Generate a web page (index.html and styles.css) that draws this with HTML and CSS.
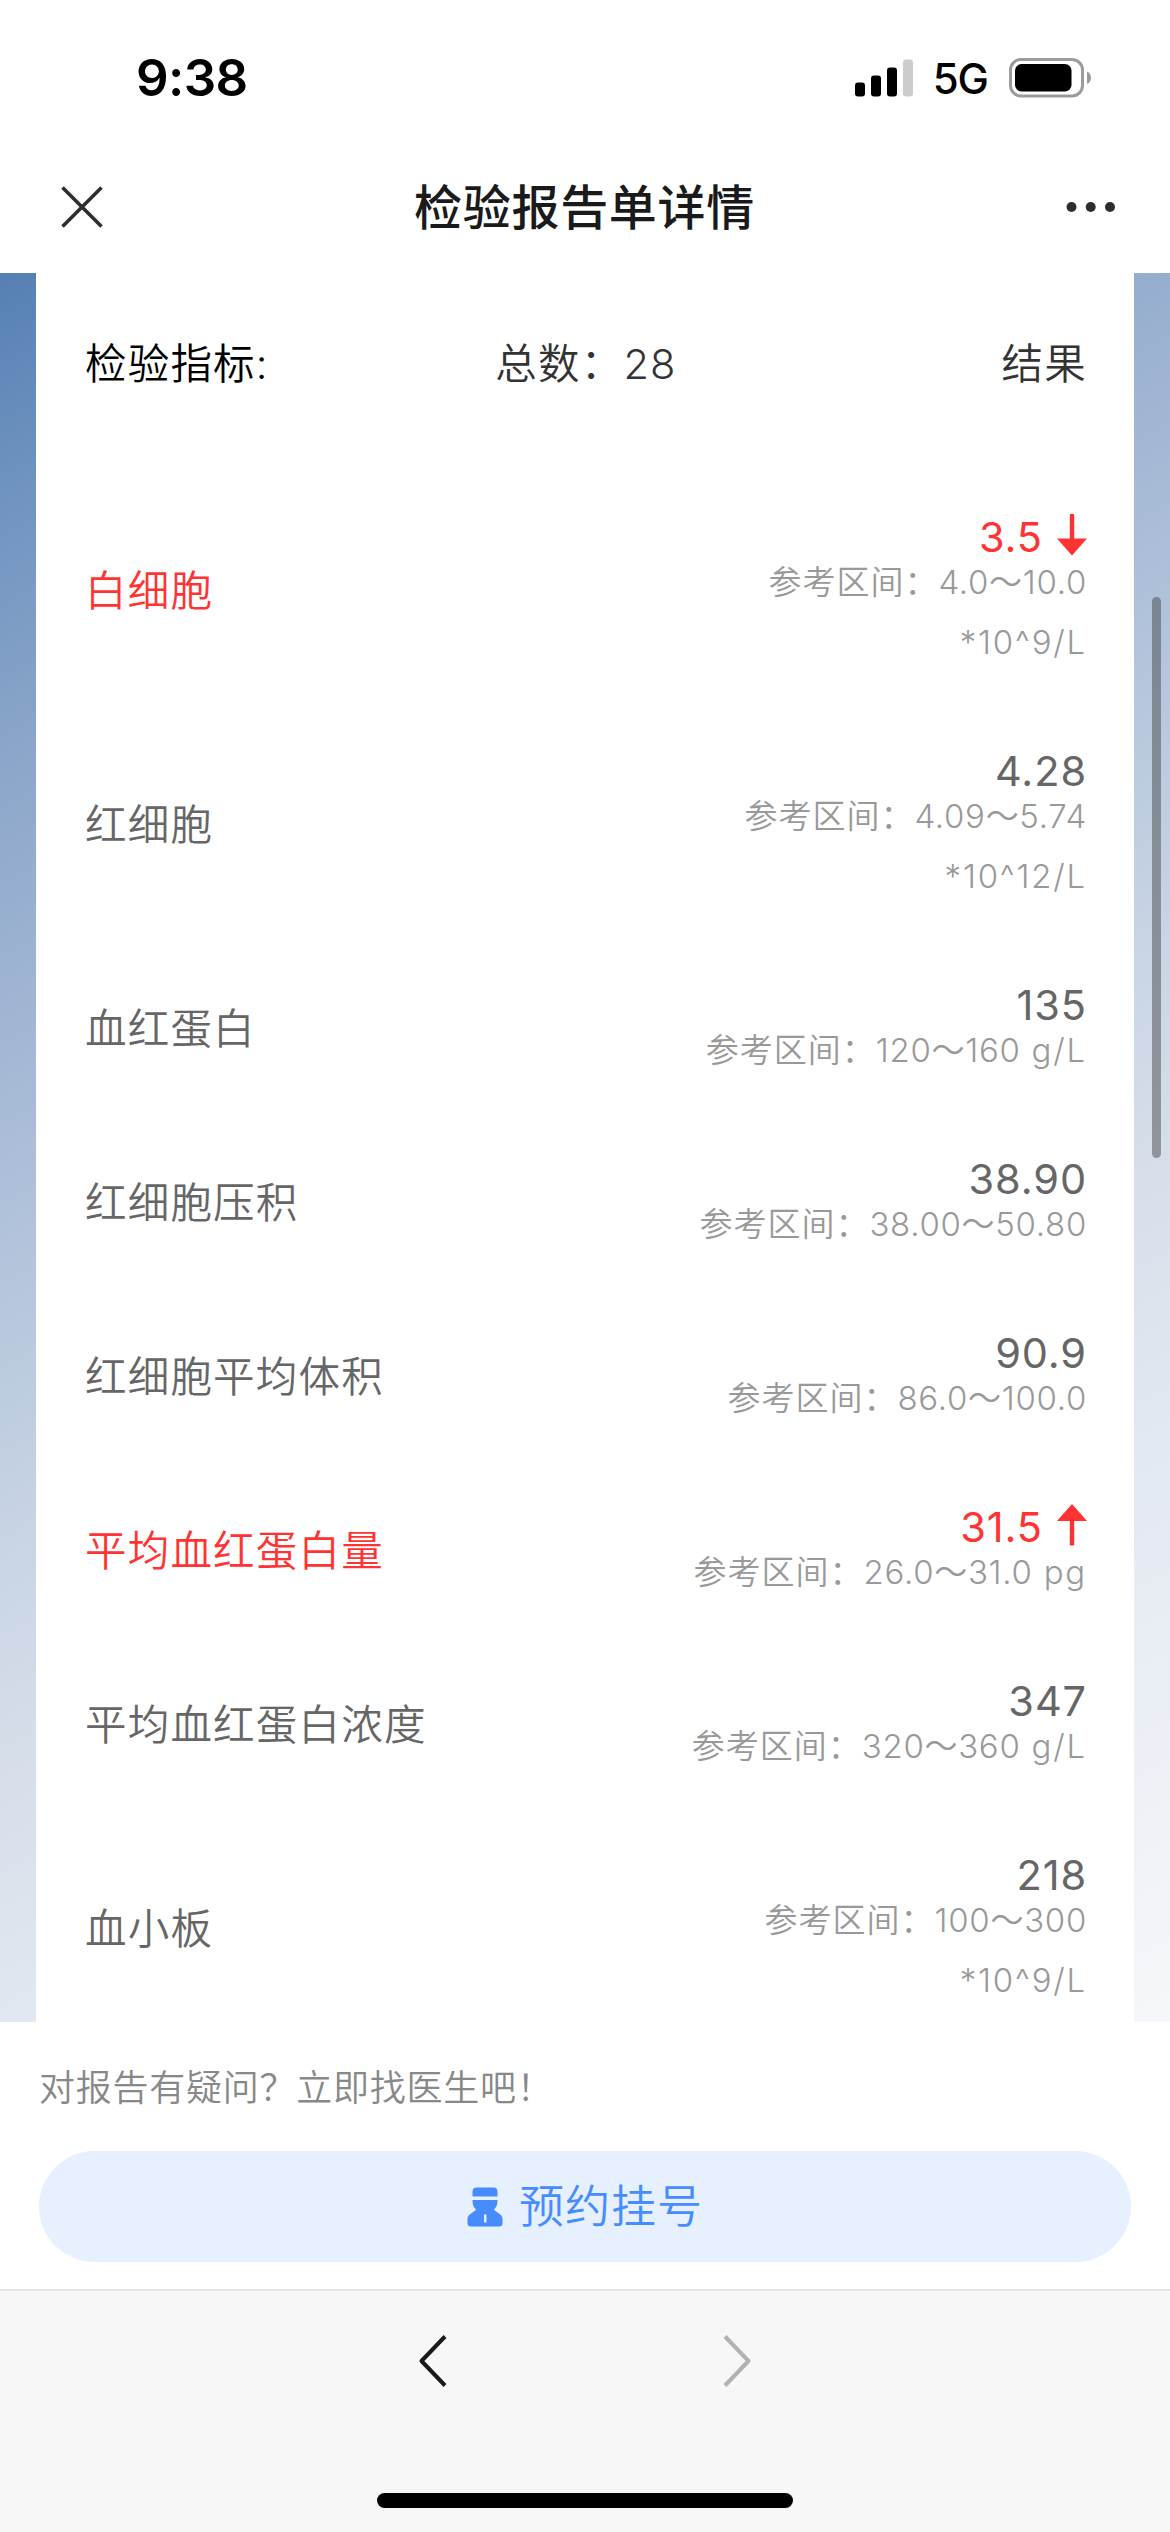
FILE: index.html
```html
<!DOCTYPE html>
<html lang="zh-CN">
<head>
<meta charset="utf-8">
<title>检验报告单详情</title>
<link rel="stylesheet" href="styles.css">
</head>
<body>
<div class="screen">
  <div class="status">
    <span class="time">9:38</span>
    <div class="indicators">
      <svg class="signal" width="42" height="38" viewBox="0 0 42 38"><rect x="0" y="23.5" width="10" height="14" rx="3"/><rect x="16" y="16.5" width="10" height="21" rx="3"/><rect x="32" y="8.5" width="10" height="29" rx="3"/><rect x="48" y="0.5" width="10" height="37" rx="3" fill="#ccc"/></svg>
      <span class="network">5G</span>
      <svg class="battery" width="83" height="40" viewBox="0 0 83 40"><rect x="1.5" y="1.5" width="72" height="36.5" rx="10.5" fill="none" stroke="#9b9b9b" stroke-width="3"/><rect x="6" y="6" width="56.5" height="27.5" rx="6.5"/><path d="M78 13.5c2.6 1 4 3.4 4 6.2s-1.400 5.200-4 6.200z" fill="#9b9b9b"/></svg>
    </div>
  </div>
  <header class="navbar">
    <svg width="42" height="42" viewBox="0 0 42 42" fill="none" stroke="#2e2e2e" stroke-width="3.6"><path d="M1.500 1.500l39 39M40.500 1.500l-39 39"/></svg>
    <h1 class="title">检验报告单详情</h1>
    <svg width="50" height="12" viewBox="0 0 50 12" fill="#2e2e2e"><circle cx="5.500" cy="6" r="5"/><circle cx="24.700" cy="6" r="5"/><circle cx="44" cy="6" r="5"/></svg>
  </header>

  <main class="report">
    <section class="card">
      <div class="summary"><span class="summary-name">检验指标:</span><span class="summary-count">总数：28</span><span class="summary-result">结果</span></div>
      <ul class="list">
        <li class="item abnormal"><span class="name">白细胞</span><div class="data"><div class="value">3.5<svg class="arrow" width="30" height="42" viewBox="0 0 30 42"><path d="M12.800 0h4.400v24.500H30L15 41.500 0 24.500h12.800z"/></svg></div><div class="range">参考区间：<span class="limits">4.0～10.0</span></div><div class="range unit">*10^9/L</div></div></li>
        <li class="item"><span class="name">红细胞</span><div class="data"><div class="value">4.28</div><div class="range">参考区间：<span class="limits">4.09～5.74</span></div><div class="range unit">*10^12/L</div></div></li>
        <li class="item"><span class="name">血红蛋白</span><div class="data"><div class="value">135</div><div class="range">参考区间：<span class="limits">120～160</span><span class="unit"> g/L</span></div></div></li>
        <li class="item"><span class="name">红细胞压积</span><div class="data"><div class="value">38.90</div><div class="range">参考区间：<span class="limits">38.00～50.80</span></div></div></li>
        <li class="item"><span class="name">红细胞平均体积</span><div class="data"><div class="value">90.9</div><div class="range">参考区间：<span class="limits">86.0～100.0</span></div></div></li>
        <li class="item abnormal"><span class="name">平均血红蛋白量</span><div class="data"><div class="value">31.5<svg class="arrow" width="30" height="42" viewBox="0 0 30 42"><path d="M12.800 41.500h4.400V17H30L15 0 0 17h12.800z"/></svg></div><div class="range">参考区间：<span class="limits">26.0～31.0</span><span class="unit"> pg</span></div></div></li>
        <li class="item"><span class="name">平均血红蛋白浓度</span><div class="data"><div class="value">347</div><div class="range">参考区间：<span class="limits">320～360</span><span class="unit"> g/L</span></div></div></li>
        <li class="item"><span class="name">血小板</span><div class="data"><div class="value">218</div><div class="range">参考区间：<span class="limits">100～300</span></div><div class="range unit">*10^9/L</div></div></li>
      </ul>
    </section>
    <div class="scrollbar"></div>
  </main>

  <section class="booking">
    <p class="prompt">对报告有疑问？立即找医生吧！</p>
    <button class="book" type="button">
      <svg width="36" height="40" viewBox="0 0 36 40" fill="#468cff"><path d="M5.500 9.500V4.500a4 4 0 0 1 4-4h17a4 4 0 0 1 4 4v5z"/><path fill-rule="evenodd" d="M5.500 13h25c0 4-.8 7.200-3.500 9.500 1 1.500 2.200 2 4 3.200 2.800 1.900 4.500 3.500 4.500 6V36a3.500 3.500 0 0 1-3.500 3.500H4A3.500 3.500 0 0 1 .5 36v-4.300c0-2.500 1.700-4.100 4.500-6 1.800-1.200 3-1.700 4-3.200C6.300 20.200 5.500 17 5.500 13zM17 27.500v8h2.500v-8z"/></svg>
      <span>预约挂号</span>
    </button>
  </section>

  <footer class="toolbar">
    <div class="history">
      <svg width="30" height="52" viewBox="0 0 30 52" fill="none" stroke="#1a1a1a" stroke-width="4"><path d="M27 1.500L3.500 26 27 50.500" stroke-linejoin="round"/></svg>
      <svg width="30" height="52" viewBox="0 0 30 52" fill="none" stroke="#b2b2b2" stroke-width="4"><path d="M3 1.500L26.500 26 3 50.500" stroke-linejoin="round"/></svg>
    </div>
    <div class="home"></div>
  </footer>
</div>
</body>
</html>
```
FILE: styles.css
```css
* { box-sizing: border-box; margin: 0; padding: 0; }
body { background: #fff; font-family: Inter, "Noto Sans CJK SC", sans-serif; }
.screen { width: 1170px; height: 2532px; display: flex; flex-direction: column; overflow: hidden; background: #fff; }

.status { height: 141px; padding: 14px 78px 0 136px; display: flex; justify-content: space-between; align-items: center; }
.time { font-size: 51px; font-weight: 600; line-height: 60px; letter-spacing: -0.6px; color: #000; }
.indicators { display: flex; align-items: center; }
.signal { overflow: visible; margin-right: 36px; }
.network { font-size: 42px; font-weight: 450; line-height: 60px; letter-spacing: -1px; padding-top: 2px; margin-right: 21px; }

.navbar { height: 132px; padding: 0 54px 0 61px; display: flex; justify-content: space-between; align-items: center; }
.title { font-family: "Noto Sans CJK SC", sans-serif; font-size: 48px; font-weight: 500; letter-spacing: 0.7px; line-height: 70px; padding-bottom: 6px; color: #1a1a1a; }

.report {
  position: relative; height: 1749px; overflow: hidden; padding: 0 36px;
  background: linear-gradient(152deg, #5580b3 0%, #6e92bf 8.7%, #8ba6ca 20.8%, #94adcd 25.2%, #a7bad6 34.9%, #c8d4e4 53.5%, #d8dfea 64.4%, #e2e8f1 74.5%, #f5f7fa 100%);
}
.card { height: 100%; background: #fff; padding: 0 47px 0 49px; }
.summary { height: 200px; padding-bottom: 24px; display: grid; grid-template-columns: 1fr auto 1fr; align-items: center; font-size: 41.5px; font-weight: 350; letter-spacing: 1.2px; color: #333; }
.summary-name { color: #000; }
.summary-result { text-align: right; }
.list { list-style: none; }
.item { display: flex; justify-content: space-between; align-items: center; color: #666; }
.name { font-size: 41.5px; font-weight: 350; line-height: 60px; letter-spacing: 1.2px; padding-top: 2px; }
.data { padding: 48px 0 35px; text-align: right; white-space: nowrap; }
.value { display: flex; justify-content: flex-end; align-items: center; height: 31px; font-size: 41.5px; font-weight: 370; line-height: 32px; letter-spacing: 0.9px; }
.arrow { margin: -3px 0 0 14px; fill: #ff3333; }
.range { font-size: 33px; line-height: 60px; letter-spacing: 1px; color: #999; font-weight: 350; }
.limits { letter-spacing: 0.7px; }
.unit { letter-spacing: 1.8px; }
.abnormal .name, .abnormal .value { color: #ff3333; }
.scrollbar { position: absolute; top: 324px; right: 9px; width: 9px; height: 561px; border-radius: 5px; background: rgba(60, 60, 60, 0.45); }

.booking { height: 267px; padding: 36px 39px 0; }
.prompt { font-size: 36px; font-weight: 350; line-height: 60px; letter-spacing: 0.75px; color: #888; }
.book { width: 100%; height: 111px; margin-top: 33px; border: 0; border-radius: 56px; background: #e6f0ff; color: #468cff; font-family: inherit; font-size: 45px; font-weight: 350; letter-spacing: 1px; line-height: 64px; display: flex; align-items: center; justify-content: center; gap: 16px; }

.toolbar { flex: 1; border-top: 2px solid #e5e5e5; background: #f7f7f7; display: flex; flex-direction: column; align-items: center; justify-content: space-between; padding: 44px 0 24px; }
.history { display: flex; gap: 274px; }
.home { width: 416px; height: 15px; border-radius: 8px; background: #000; }
```
